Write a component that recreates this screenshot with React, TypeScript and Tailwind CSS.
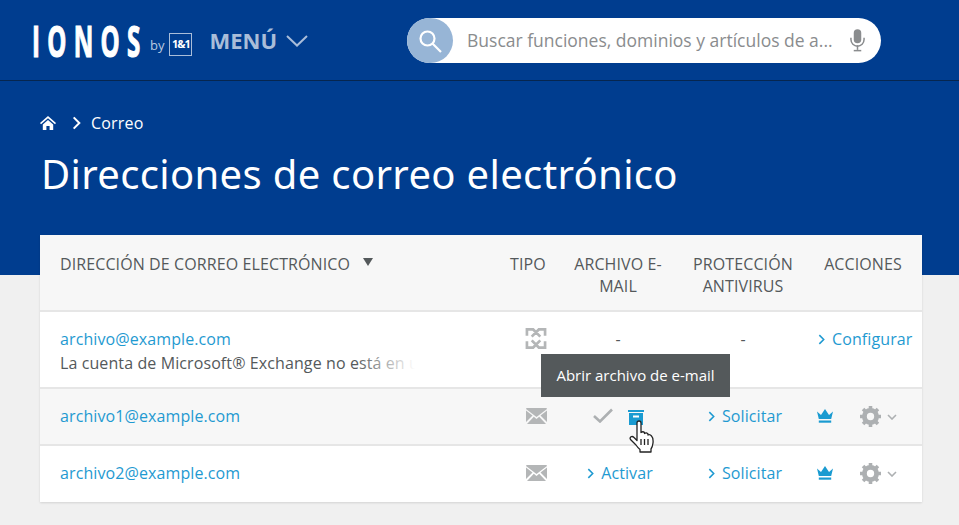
import React from 'react';

const font = { fontFamily: '"Open Sans", sans-serif' };

function Chevron({ className }: { className?: string }) {
  return (
    <svg viewBox="0 0 8 12" className={className} fill="none" stroke="currentColor" strokeWidth="1.8">
      <path d="M1.5 1 L6.5 6 L1.5 11" />
    </svg>
  );
}

function LinkAction({ label }: { label: string }) {
  return (
    <a className="h-fit flex items-center gap-[7px] text-[#1f9ad1] whitespace-nowrap tracking-[0.1px]">
      <Chevron className="w-[7px] h-[11px] mt-[1px]" />
      {label}
    </a>
  );
}

function ExchangeIcon() {
  return (
    <svg viewBox="0 0 22 22" className="w-[22px] h-[21px]" fill="none" stroke="#b4b6b7">
      <path d="M1.5 8 V1.5 H8 L15.5 9 M20.5 8 V1.5 H14 L6.5 9 M1.5 14 V20.5 H8 L15.5 13 M20.5 14 V20.5 H14 L6.5 13" strokeWidth="2.8" />
      <path d="M9 11 L11 9 L13 11 L11 13 Z" fill="#ffffff" stroke="none" />
    </svg>
  );
}

function MailIcon() {
  return (
    <svg viewBox="0 0 21 16" className="w-[21px] h-[16px]">
      <path d="M0 1 Q0 0 1 0 H20 Q21 0 21 1 L10.5 9 Z" fill="#b4b6b7" />
      <path d="M0 2.6 V14 L6.5 7.5 Z M21 2.6 V14 L14.5 7.5 Z" fill="#b4b6b7" />
      <path d="M1 16 L7.8 8.8 L10.5 11 L13.2 8.8 L20 16 Z" fill="#b4b6b7" />
    </svg>
  );
}

function CrownIcon() {
  return (
    <svg viewBox="0 0 16 14" className="w-[16px] h-[14px]" fill="#1a9bd1">
      <path d="M0 2.5 L4 6 L8 0 L12 6 L16 2.5 L14.2 10 H1.8 Z" />
      <rect x="1.8" y="11.5" width="12.4" height="2.2" />
    </svg>
  );
}

function GearIcon() {
  return (
    <svg viewBox="0 0 20 20" className="w-[21px] h-[21px]" fill="none">
      <circle cx="10" cy="10" r="5.8" stroke="#adb0b2" strokeWidth="4.6" />
      <path
        d="M10 0 V3 M10 17 V20 M0 10 H3 M17 10 H20 M2.9 2.9 L5 5 M15 15 L17.1 17.1 M17.1 2.9 L15 5 M5 15 L2.9 17.1"
        stroke="#adb0b2"
        strokeWidth="3.4"
      />
    </svg>
  );
}

function Actions() {
  return (
    <div className="flex items-center pl-[1px] mt-[1px]">
      <CrownIcon />
      <span className="ml-[27px]"><GearIcon /></span>
      <svg viewBox="0 0 10 6" className="w-[10px] h-[6px] ml-[6px] mt-[2px]" fill="none" stroke="#adb0b2" strokeWidth="1.6">
        <path d="M1 1 L5 5 L9 1" />
      </svg>
    </div>
  );
}

const rowCols = 'grid grid-cols-[450px_76px_104px_146px_94px] pr-3';

export default function App() {
  return (
    <div className="h-[525px] overflow-hidden bg-[#f0f0f0] text-[#54595b]" style={font}>
      <div className="h-[275px] bg-[#003d8f]">
        {/* Top bar */}
        <header className="h-[81px] border-b border-[#06264f] flex items-center">
          <div className="w-[407px] flex items-center pl-[32px] shrink-0">
            <span className="text-white font-bold text-[43px] leading-none w-[113px] tracking-[13px] origin-left scale-x-[0.56] whitespace-nowrap [-webkit-text-stroke:1.2px_white]">IONOS</span>
            <span className="text-[#b9c9e0] text-[13px] ml-[5px] mt-[11px]">by</span>
            <span className="ml-[5px] mt-[9px] w-[23px] h-[23px] border border-[#a9bdd9] flex items-center justify-center text-white text-[11px] font-bold tracking-[-1px]">1&amp;1</span>
            <span className="ml-[17px] text-[#a9bdd9] font-bold text-[22px]">MENÚ</span>
            <svg viewBox="0 0 22 12" className="w-[22px] h-[12px] ml-[9px] mt-[2px]" fill="none" stroke="#a9bdd9" strokeWidth="2">
              <path d="M1 1 L11 10.5 L21 1" />
            </svg>
          </div>
          <div className="w-[474px] h-[45px] mt-[1px] rounded-full bg-white flex items-center">
            <div className="w-[46px] h-[45px] rounded-full bg-[#97b5d6] flex items-center justify-center shrink-0">
              <svg viewBox="0 0 26 26" className="w-[26px] h-[26px]" fill="none" stroke="white" strokeWidth="2.2">
                <circle cx="10.5" cy="10.5" r="7" />
                <path d="M15.5 15.5 L24 24" />
              </svg>
            </div>
            <span className="ml-[14px] w-[366px] text-[#8a8c8e] text-[17.5px] whitespace-nowrap">Buscar funciones, dominios y artículos de a...</span>
            <svg viewBox="0 0 16 24" className="w-[15px] h-[23px] ml-[17px]" fill="#8a8c8e">
              <rect x="4" y="0" width="8" height="15" rx="4" />
              <path d="M1 9 V11 A7 7 0 0 0 15 11 V9" fill="none" stroke="#8a8c8e" strokeWidth="1.6" />
              <rect x="7.2" y="17" width="1.6" height="5" />
              <rect x="4" y="22" width="8" height="1.6" />
            </svg>
          </div>
        </header>

        {/* Breadcrumb */}
        <nav className="flex items-center pl-[40px] pt-[31px] text-white text-[16px] leading-[22px]">
          <svg viewBox="0 0 16 14" className="w-[16px] h-[14px]" fill="white">
            <path d="M8 0 L16 7 L15 8.2 L8 2.2 L1 8.2 L0 7 Z" />
            <path d="M2.8 8.4 L8 3.9 L13.2 8.4 V14 H9.6 V10 H6.4 V14 H2.8 Z" />
          </svg>
          <Chevron className="w-[9px] h-[14px] ml-[16px] text-white" />
          <span className="ml-[10px] tracking-[0.2px]">Correo</span>
        </nav>

        <h1 className="pl-[41px] mt-[15px] text-white text-[40px] leading-[50px] tracking-[0.35px]" style={{ fontFamily: '"Noto Sans", sans-serif' }}>
          Direcciones de correo electrónico
        </h1>
      </div>

      {/* Table card */}
      <div className="relative ml-[40px] w-[882px] -mt-[40px] bg-white shadow-[0_1px_2px_rgba(0,0,0,0.12)] text-[16px] tracking-[0.1px]">
        <div className={`${rowCols} h-[77px] bg-[#f7f7f7] border-b-2 border-[#e6e6e6] leading-[22px] pt-[18px] text-center`}>
          <div className="text-left pl-[20px] flex items-start whitespace-nowrap">
            DIRECCIÓN DE CORREO ELECTRÓNICO
            <span className="ml-[13px] mt-[5px] w-0 h-0 border-x-[5px] border-x-transparent border-t-[8px] border-t-[#54595b]" />
          </div>
          <div>TIPO</div>
          <div className="px-2">ARCHIVO E-MAIL</div>
          <div className="px-4">PROTECCIÓN ANTIVIRUS</div>
          <div className="whitespace-nowrap">ACCIONES</div>
        </div>

        <div className={`${rowCols} h-[77px] border-b-2 border-[#e6e6e6] leading-[24px] pt-[15px]`}>
          <div className="pl-[20px]">
            <div className="text-[#1f9ad1]">archivo@example.com</div>
            <div className="relative w-[355px] overflow-hidden whitespace-nowrap">
              La cuenta de Microsoft® Exchange no está en uso
              <span className="absolute right-0 top-0 bottom-0 w-[60px] bg-linear-to-r from-transparent to-white" />
            </div>
          </div>
          <div className="flex justify-center pl-[16px] pt-[1px]"><ExchangeIcon /></div>
          <div className="text-center">-</div>
          <div className="text-center">-</div>
          <div className="flex pl-[2px]"><LinkAction label="Configurar" /></div>
        </div>

        <div className={`${rowCols} h-[57px] pb-[2px] bg-[#f7f7f7] border-b-2 border-[#e6e6e6] items-center`}>
          <div className="pl-[20px] text-[#1f9ad1]">archivo1@example.com</div>
          <div className="flex justify-center pl-[16px]"><MailIcon /></div>
          <div className="flex items-center justify-center gap-[15px]">
            <svg viewBox="0 0 20 15" className="w-[20px] h-[15px]" fill="none" stroke="#adb0b2" strokeWidth="2.6">
              <path d="M1 8 L7 13.5 L19 1.5" />
            </svg>
            <svg viewBox="0 0 16 15" className="w-[16px] h-[15px] mt-[3px]">
              <rect x="0" y="0" width="16" height="2" fill="#1a9bd1" />
              <rect x="1" y="3" width="14" height="12" fill="#1a9bd1" />
              <rect x="5" y="5.5" width="6" height="2" fill="white" />
            </svg>
          </div>
          <div className="flex justify-center pl-[4px]"><LinkAction label="Solicitar" /></div>
          <div className="flex"><Actions /></div>
        </div>

        <div className={`${rowCols} h-[56px] pb-[3px] items-center`}>
          <div className="pl-[20px] text-[#1f9ad1]">archivo2@example.com</div>
          <div className="flex justify-center pl-[16px]"><MailIcon /></div>
          <div className="flex justify-center pl-[4px]"><LinkAction label="Activar" /></div>
          <div className="flex justify-center pl-[4px]"><LinkAction label="Solicitar" /></div>
          <div className="flex"><Actions /></div>
        </div>

        {/* Tooltip */}
        <div className="absolute left-[501px] top-[119px] w-[189px] h-[43px] bg-[#54595b] text-white text-[15px] tracking-normal flex items-center justify-center">
          Abrir archivo de e-mail
        </div>

        {/* Hand cursor */}
        <svg viewBox="0 0 26 33" className="absolute left-[589px] top-[185px] w-[26px] h-[33px]" fill="white" stroke="#222" strokeWidth="1.3" strokeLinejoin="round">
          <path d="M8 3 Q8 1 10 1 Q12 1 12 3 V12.5 Q14 11 15.5 12.5 V13.5 Q17.5 12 19 14 V15 Q21 14 22.5 16 Q24.5 18 24 23 Q23.5 27 22 29 V32 H11 V29.5 Q9 28 7 25 L1.5 19.5 Q0.5 18 2 16.8 Q3.5 16 5 17.5 L8 20.5 Z" />
          <path d="M12 19 V25 M15.5 19 V25 M19 19 V25" fill="none" />
        </svg>
      </div>
    </div>
  );
}
